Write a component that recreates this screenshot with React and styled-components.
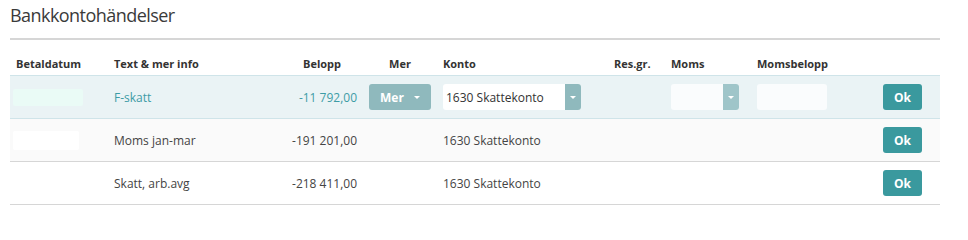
import React from "react";
import styled, { createGlobalStyle, css } from "styled-components";

const GlobalStyle = createGlobalStyle`
  html, body { margin: 0; padding: 0; background: #ffffff; }
  body { font-family: "Open Sans", "Liberation Sans", sans-serif; color: #444; }
  * { box-sizing: border-box; }
`;

const COLS = "98px 172px 83px 74px 171px 57px 86px 126px 63px";

const Page = styled.div`
  width: 968px;
  padding: 0 28px 0 10px;
`;

const Title = styled.h1`
  margin: 0;
  padding-top: 2px;
  height: 40px;
  font-size: 18px;
  font-weight: 400;
  color: #3a3a3a;
  line-height: 26px;
  letter-spacing: -0.55px;
  border-bottom: 2px solid #d6d6d6;
`;

const Table = styled.div`
  width: 930px;
  margin-top: 11px;
`;

const Row = styled.div`
  display: grid;
  grid-template-columns: ${COLS};
  align-items: center;
  ${(p) =>
    p.$head
      ? css`
          height: 25px;
          border-bottom: 1px solid #cfe4e9;
        `
      : css`
          height: 43px;
          border-bottom: 1px solid ${p.$active ? "#cfe4e9" : "#d6d6d6"};
          background: ${p.$active ? "#eaf3f5" : p.$alt ? "#fafafa" : "#ffffff"};
        `}
`;

const Th = styled.div`
  font-size: 11px;
  font-weight: 700;
  color: #333;
  padding: 0 6px;
  white-space: nowrap;
  text-align: ${(p) => p.$align || "left"};
  padding-right: ${(p) => (p.$pr != null ? p.$pr : 6)}px;
`;

const Td = styled.div`
  font-size: 12px;
  color: ${(p) => (p.$accent ? "#3d9ca6" : "#444")};
  padding: 0 6px;
  white-space: nowrap;
  display: flex;
  align-items: center;
  justify-content: ${(p) => p.$justify || "flex-start"};
  padding-left: ${(p) => (p.$pl != null ? p.$pl : 6)}px;
`;

const DateBox = styled.div`
  width: ${(p) => p.$w}px;
  height: ${(p) => p.$h}px;
  background: ${(p) => p.$bg};
  border-radius: 2px;
`;

const Caret = styled.span`
  width: 0;
  height: 0;
  border-left: 3px solid transparent;
  border-right: 3px solid transparent;
  border-top: 3px solid #ffffff;
  display: inline-block;
`;

const MerButton = styled.button`
  width: 66px;
  height: 26px;
  border: none;
  border-radius: 3px;
  background: #8fb9bd;
  color: #fff;
  font-family: inherit;
  font-size: 12px;
  font-weight: 700;
  display: flex;
  align-items: center;
  justify-content: space-between;
  padding: 0 11px;
  cursor: pointer;
`;

const Select = styled.div`
  width: ${(p) => p.$w}px;
  height: 26px;
  border-radius: 3px;
  background: ${(p) => p.$bg};
  display: flex;
  overflow: hidden;
`;

const SelectValue = styled.div`
  flex: 1;
  font-size: 12px;
  color: #333;
  display: flex;
  align-items: center;
  padding-left: 3px;
  white-space: nowrap;
`;

const SelectToggle = styled.div`
  width: 16px;
  background: ${(p) => p.$bg};
  display: flex;
  align-items: center;
  justify-content: center;
`;

const TextInput = styled.div`
  width: 70px;
  height: 26px;
  border-radius: 3px;
  background: #fafcfd;
`;

const OkButton = styled.button`
  width: 39px;
  height: 26px;
  border: none;
  border-radius: 3px;
  background: #3a999e;
  color: #fff;
  font-family: inherit;
  font-size: 12px;
  font-weight: 700;
  padding: 0;
  cursor: pointer;
`;

const rows = [
  { text: "Moms jan-mar", amount: "-191 201,00", konto: "1630 Skattekonto", date: true },
  { text: "Skatt, arb.avg", amount: "-218 411,00", konto: "1630 Skattekonto", date: false },
];

export default function App() {
  return (
    <>
      <GlobalStyle />
      <Page>
        <Title>Bankkontohändelser</Title>
        <Table>
          <Row $head>
            <Th>Betaldatum</Th>
            <Th>Text &amp; mer info</Th>
            <Th $align="right" $pr={22}>Belopp</Th>
            <Th $align="center">Mer</Th>
            <Th>Konto</Th>
            <Th>Res.gr.</Th>
            <Th>Moms</Th>
            <Th>Momsbelopp</Th>
            <Th />
          </Row>
          <Row $active>
            <Td $pl={3}>
              <DateBox $w={70} $h={17} $bg="#eafbf6" />
            </Td>
            <Td $accent>F-skatt</Td>
            <Td $accent $justify="flex-end">-11 792,00</Td>
            <Td $justify="center">
              <MerButton>
                <span>Mer</span>
                <Caret />
              </MerButton>
            </Td>
            <Td>
              <Select $w={138} $bg="#ffffff">
                <SelectValue>1630 Skattekonto</SelectValue>
                <SelectToggle $bg="#8fb9bd">
                  <Caret />
                </SelectToggle>
              </Select>
            </Td>
            <Td />
            <Td>
              <Select $w={68} $bg="#fafcfd">
                <SelectValue />
                <SelectToggle $bg="#9fc5c9">
                  <Caret />
                </SelectToggle>
              </Select>
            </Td>
            <Td>
              <TextInput />
            </Td>
            <Td>
              <OkButton>Ok</OkButton>
            </Td>
          </Row>
          {rows.map((r, i) => (
            <Row key={r.text} $alt={i === 0}>
              <Td $pl={3}>{r.date && <DateBox $w={66} $h={19} $bg="#ffffff" />}</Td>
              <Td>{r.text}</Td>
              <Td $justify="flex-end">{r.amount}</Td>
              <Td />
              <Td>{r.konto}</Td>
              <Td />
              <Td />
              <Td />
              <Td>
                <OkButton>Ok</OkButton>
              </Td>
            </Row>
          ))}
        </Table>
      </Page>
    </>
  );
}
